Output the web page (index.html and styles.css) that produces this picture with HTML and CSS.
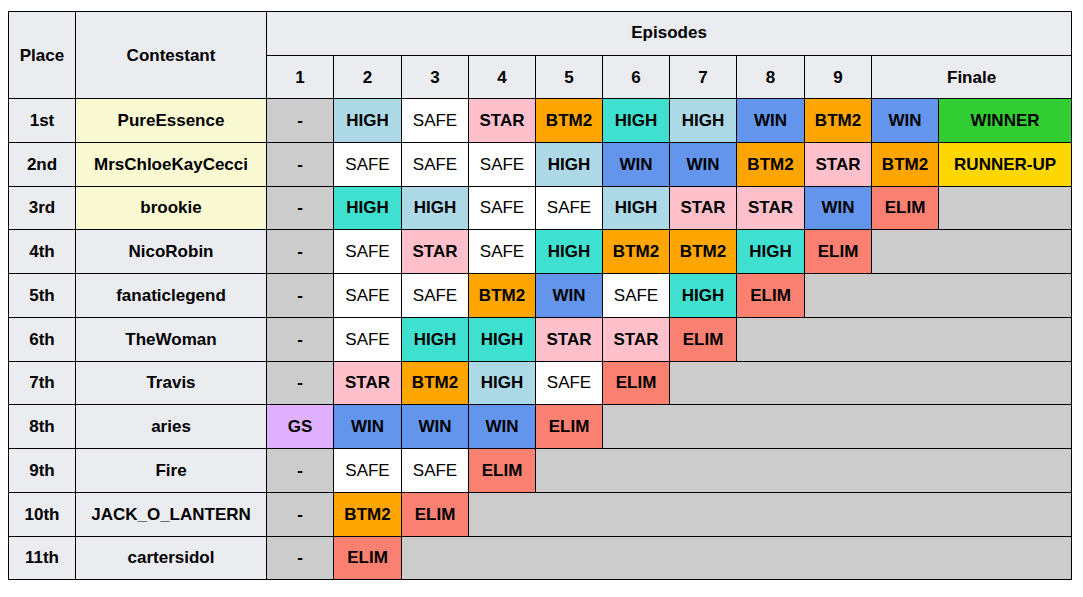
FILE: index.html
```html
<!DOCTYPE html>
<html>
<head>
<meta charset="utf-8">
<link rel="stylesheet" href="styles.css">
</head>
<body>
<table class="progress">
<colgroup>
<col class="c-place"><col class="c-name">
<col class="c-ep"><col class="c-ep2"><col class="c-ep"><col class="c-ep"><col class="c-ep"><col class="c-ep"><col class="c-ep"><col class="c-ep2"><col class="c-ep"><col class="c-ep"><col class="c-fin">
</colgroup>
<thead>
<tr class="h1">
<th rowspan="2">Place</th>
<th rowspan="2">Contestant</th>
<th colspan="11" class="eps">Episodes</th>
</tr>
<tr class="h2">
<th>1</th><th>2</th><th>3</th><th>4</th><th>5</th><th>6</th><th>7</th><th>8</th><th>9</th><th colspan="2">Finale</th>
</tr>
</thead>
<tbody>
<tr>
<th>1st</th><td class="name top">PureEssence</td>
<td class="na">-</td><td class="high">HIGH</td><td class="safe">SAFE</td><td class="star">STAR</td><td class="btm">BTM2</td><td class="high2">HIGH</td><td class="high">HIGH</td><td class="win">WIN</td><td class="btm">BTM2</td><td class="win">WIN</td><td class="winner">WINNER</td>
</tr>
<tr>
<th>2nd</th><td class="name top">MrsChloeKayCecci</td>
<td class="na">-</td><td class="safe">SAFE</td><td class="safe">SAFE</td><td class="safe">SAFE</td><td class="high">HIGH</td><td class="win">WIN</td><td class="win">WIN</td><td class="btm">BTM2</td><td class="star">STAR</td><td class="btm">BTM2</td><td class="runner">RUNNER-UP</td>
</tr>
<tr>
<th>3rd</th><td class="name top">brookie</td>
<td class="na">-</td><td class="high2">HIGH</td><td class="high">HIGH</td><td class="safe">SAFE</td><td class="safe">SAFE</td><td class="high">HIGH</td><td class="star">STAR</td><td class="star">STAR</td><td class="win">WIN</td><td class="elim">ELIM</td><td class="out"></td>
</tr>
<tr>
<th>4th</th><td class="name">NicoRobin</td>
<td class="na">-</td><td class="safe">SAFE</td><td class="star">STAR</td><td class="safe">SAFE</td><td class="high2">HIGH</td><td class="btm">BTM2</td><td class="btm">BTM2</td><td class="high2">HIGH</td><td class="elim">ELIM</td><td class="out" colspan="2"></td>
</tr>
<tr>
<th>5th</th><td class="name">fanaticlegend</td>
<td class="na">-</td><td class="safe">SAFE</td><td class="safe">SAFE</td><td class="btm">BTM2</td><td class="win">WIN</td><td class="safe">SAFE</td><td class="high2">HIGH</td><td class="elim">ELIM</td><td class="out" colspan="3"></td>
</tr>
<tr>
<th>6th</th><td class="name">TheWoman</td>
<td class="na">-</td><td class="safe">SAFE</td><td class="high2">HIGH</td><td class="high2">HIGH</td><td class="star">STAR</td><td class="star">STAR</td><td class="elim">ELIM</td><td class="out" colspan="4"></td>
</tr>
<tr>
<th>7th</th><td class="name">Travis</td>
<td class="na">-</td><td class="star">STAR</td><td class="btm">BTM2</td><td class="high">HIGH</td><td class="safe">SAFE</td><td class="elim">ELIM</td><td class="out" colspan="5"></td>
</tr>
<tr>
<th>8th</th><td class="name">aries</td>
<td class="gs">GS</td><td class="win">WIN</td><td class="win">WIN</td><td class="win">WIN</td><td class="elim">ELIM</td><td class="out" colspan="6"></td>
</tr>
<tr>
<th>9th</th><td class="name">Fire</td>
<td class="na">-</td><td class="safe">SAFE</td><td class="safe">SAFE</td><td class="elim">ELIM</td><td class="out" colspan="7"></td>
</tr>
<tr>
<th>10th</th><td class="name">JACK_O_LANTERN</td>
<td class="na">-</td><td class="btm">BTM2</td><td class="elim">ELIM</td><td class="out" colspan="8"></td>
</tr>
<tr>
<th>11th</th><td class="name">cartersidol</td>
<td class="na">-</td><td class="elim">ELIM</td><td class="out" colspan="9"></td>
</tr>
</tbody>
</table>
</body>
</html>
```

FILE: styles.css
```css
html, body {
  background: #ffffff;
}
body {
  margin: 11px 8px 8px 8px;
  font-family: "Liberation Sans", Arial, sans-serif;
  font-size: 17px;
  color: #000;
}
.progress {
  border-collapse: collapse;
  table-layout: fixed;
  width: 1064px;
  text-align: center;
}
.c-place { width: 67px; }
.c-name { width: 191px; }
.c-ep { width: 67px; }
.c-ep2 { width: 68px; }
.c-fin { width: 133px; }
.progress th,
.progress td {
  border: 1px solid #000;
  padding: 0 2px;
  font-weight: bold;
  line-height: 19px;
}
.progress th {
  background: #eaecf0;
}
.progress th.eps {
  padding-bottom: 3px;
}
.h1 { height: 44px; }
.h2 { height: 43px; }
tbody tr { height: 43.75px; }
.name { background: #eaecf0; }
.name.top { background: #fafad2; }
.na { background: #cccccc; }
.out { background: #cccccc; }
.safe { background: #ffffff; font-weight: normal !important; }
.high { background: #add8e6; }
.high2 { background: #40e0d0; }
.star { background: #ffc0cb; }
.btm { background: #ffa500; }
.win { background: #6495ed; }
.elim { background: #fa8072; }
.winner { background: #32cd32; }
.runner { background: #ffd700; }
.gs { background: #e0b0ff; }
```
